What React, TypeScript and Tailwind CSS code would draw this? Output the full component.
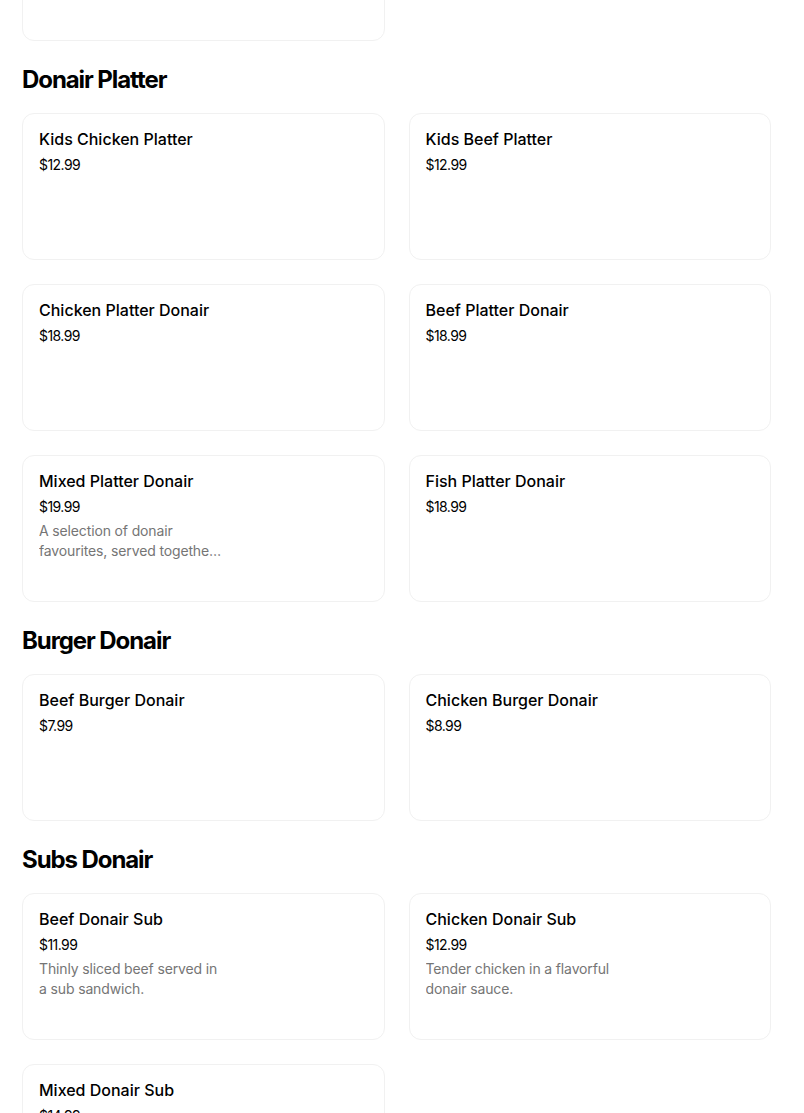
type Item = { name: string; price: string; desc?: string };

const sections: { title?: string; items: Item[] }[] = [
  {
    items: [{ name: 'Mixed Donair Wrap', price: '$13.99', desc: 'Beef and chicken donair with your choice of toppings.' }],
  },
  {
    title: 'Donair Platter',
    items: [
      { name: 'Kids Chicken Platter', price: '$12.99' },
      { name: 'Kids Beef Platter', price: '$12.99' },
      { name: 'Chicken Platter Donair', price: '$18.99' },
      { name: 'Beef Platter Donair', price: '$18.99' },
      {
        name: 'Mixed Platter Donair',
        price: '$19.99',
        desc: 'A selection of donair favourites, served together on one plate with rice and salad.',
      },
      { name: 'Fish Platter Donair', price: '$18.99' },
    ],
  },
  {
    title: 'Burger Donair',
    items: [
      { name: 'Beef Burger Donair', price: '$7.99' },
      { name: 'Chicken Burger Donair', price: '$8.99' },
    ],
  },
  {
    title: 'Subs Donair',
    items: [
      { name: 'Beef Donair Sub', price: '$11.99', desc: 'Thinly sliced beef served in a sub sandwich.' },
      { name: 'Chicken Donair Sub', price: '$12.99', desc: 'Tender chicken in a flavorful donair sauce.' },
      { name: 'Mixed Donair Sub', price: '$14.99', desc: 'Beef and chicken together in a sub.' },
    ],
  },
];

function Card({ item }: { item: Item }) {
  return (
    <div className="h-[147px] rounded-xl border border-[#f1f1f1] bg-white px-4 pt-[15px]">
      <div className="w-[186px]">
        <div className="text-[16px] leading-5 font-medium text-black whitespace-nowrap">{item.name}</div>
        <div className="mt-[6px] text-[14px] leading-5 tracking-[-0.04em] text-black">{item.price}</div>
        {item.desc && (
          <div className="mt-1 text-[14px] leading-5 tracking-[-0.01em] text-[#757575] line-clamp-2">{item.desc}</div>
        )}
      </div>
    </div>
  );
}

export default function App() {
  return (
    <div className="min-h-screen overflow-hidden bg-white font-['Inter',sans-serif]">
      <div className="-mt-[106px] pl-[22px] pr-[33px]">
        {sections.map((s, i) => (
          <section key={i}>
            {s.title && (
              <h2 className="mt-[23px] mb-[17px] text-[24px] leading-8 font-bold tracking-[-0.045em] text-black">
                {s.title}
              </h2>
            )}
            <div className="grid grid-cols-2 gap-6">
              {s.items.map((it) => (
                <Card key={it.name} item={it} />
              ))}
            </div>
          </section>
        ))}
      </div>
    </div>
  );
}
